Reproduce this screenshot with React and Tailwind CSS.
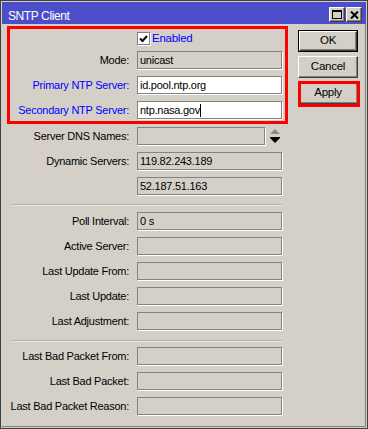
import React from "react";

const FONT = "font-['Liberation_Sans',Arial,sans-serif] text-[11px] tracking-[-0.25px]";

function Field({ value, white, narrow, cursor }) {
  return (
    <div
      className={`h-[18px] ${narrow ? "w-[128px]" : "w-[145px]"} border border-[#858380] shadow-[1px_1px_0_#ffffff] ${
        white ? "bg-white" : "bg-[#d4d0c8]"
      } pl-[2px] leading-[16px] text-black whitespace-nowrap overflow-hidden`}
    >
      {value}
      {cursor && <span className="inline-block w-px h-[13px] bg-black align-[-3px]" />}
    </div>
  );
}

function Row({ label, blue, children }) {
  return (
    <div className="flex h-[25px] items-start">
      <div
        className={`w-[119px] mt-[3px] leading-[18px] text-right whitespace-nowrap ${
          blue ? "text-[#0000ff]" : "text-black"
        }`}
      >
        {label ? label + ":" : ""}
      </div>
      <div className="ml-[8px] mt-[3px] flex items-start">{children}</div>
    </div>
  );
}

function Sep({ top }) {
  return (
    <div className={`h-[10px] ${top ? "pt-[6px]" : "pt-[5px]"} pl-[5px] pr-[6px]`}>
      <div className="h-px bg-[#b4b0a8]" />
      <div className="h-px bg-[#ece9e4]" />
    </div>
  );
}

function Btn({ children, def }) {
  return (
    <div className={`w-[60px] h-[22px] bg-[#d4d0c8] ${def ? "border border-black" : ""}`}>
      <div className="w-full h-full border-t border-l border-t-white border-l-white border-r border-b border-r-[#404040] border-b-[#404040] shadow-[inset_-1px_-1px_0_#808080] flex items-center justify-center text-black leading-none text-[11.5px]">
        {children}
      </div>
    </div>
  );
}

function TitleBtn({ children }) {
  return (
    <div className="w-[16px] h-[15px] bg-[#d4d0c8] border-t border-l border-t-white border-l-white border-r border-b border-r-[#404040] border-b-[#404040] shadow-[inset_-1px_-1px_0_#808080] flex items-center justify-center">
      {children}
    </div>
  );
}

export default function App() {
  return (
    <div className={`w-[368px] h-[429px] box-border border border-[#404040] bg-[#d4d0c8] p-px ${FONT} overflow-hidden`}>
      <div className="h-full flex flex-col shadow-[inset_-1px_-1px_0_#808080]">
        {/* Title bar */}
        <div className="h-[22px] bg-[#4b4dc9] flex items-start justify-between pl-[6px] pr-[4px]">
          <div className="text-white text-[12px] tracking-[-0.4px] leading-[13px] mt-[8px]">SNTP Client</div>
          <div className="flex gap-[1px] mt-[5px]">
            <TitleBtn>
              <svg width="10" height="9" viewBox="0 0 10 9">
                <rect x="0.5" y="0.5" width="9" height="8" fill="none" stroke="#000" />
                <rect x="0" y="0" width="10" height="2" fill="#000" />
              </svg>
            </TitleBtn>
            <TitleBtn>
              <svg width="9" height="8" viewBox="0 0 9 8">
                <path d="M1 0.5 L8 7.5 M8 0.5 L1 7.5" stroke="#000" strokeWidth="2" />
              </svg>
            </TitleBtn>
          </div>
        </div>

        {/* Body */}
        <div className="flex pl-[5px] pt-[2px]">
          {/* Left column */}
          <div className="w-[281px] flex flex-col">
            <div className="h-[98px] border-[3px] border-[#ff0000] overflow-visible">
              <div className="flex h-[19px] items-start">
                <div className="w-[119px]" />
                <div className="ml-[8px] mt-[3px] flex items-center">
                  <div className="w-[13px] h-[13px] bg-white border border-[#808080] shadow-[1px_1px_0_#ffffff] flex items-center justify-center">
                    <svg width="9" height="8" viewBox="0 0 9 8">
                      <path d="M1 3.5 L3.5 6 L8 1" fill="none" stroke="#000" strokeWidth="2" />
                    </svg>
                  </div>
                  <span className="ml-[2px] text-[#0000ff] leading-[13px] text-[11.5px]">Enabled</span>
                </div>
              </div>
              <Row label="Mode">
                <Field value="unicast" />
              </Row>
              <Row label="Primary NTP Server" blue>
                <Field value="id.pool.ntp.org" white />
              </Row>
              <Row label="Secondary NTP Server" blue>
                <Field value="ntp.nasa.gov" white cursor />
              </Row>
            </div>
            <div className="pl-[3px]">
              <Row label="Server DNS Names">
                <Field value="" narrow />
                <svg width="12" height="14" viewBox="0 0 12 14" className="ml-[4px] mt-[2px]">
                  <path d="M1 5 L6 0 L11 5 Z" fill="#8a8a8a" />
                  <rect x="1" y="8" width="10" height="1" fill="#000" />
                  <path d="M1 9 L6 14 L11 9 Z" fill="#000" />
                </svg>
              </Row>
              <Row label="Dynamic Servers">
                <Field value="119.82.243.189" />
              </Row>
              <Row label="">
                <Field value="52.187.51.163" />
              </Row>
            </div>
            <Sep />
            <div className="pl-[3px]">
              <Row label="Poll Interval">
                <Field value="0 s" />
              </Row>
              <Row label="Active Server">
                <Field value="" />
              </Row>
              <Row label="Last Update From">
                <Field value="" />
              </Row>
              <Row label="Last Update">
                <Field value="" />
              </Row>
              <Row label="Last Adjustment">
                <Field value="" />
              </Row>
            </div>
            <Sep top />
            <div className="pl-[3px]">
              <Row label="Last Bad Packet From">
                <Field value="" />
              </Row>
              <Row label="Last Bad Packet">
                <Field value="" />
              </Row>
              <Row label="Last Bad Packet Reason">
                <Field value="" />
              </Row>
            </div>
          </div>

          {/* Right buttons */}
          <div className="ml-[10px] mt-[4px] flex flex-col gap-[4px]">
            <Btn def>OK</Btn>
            <Btn>Cancel</Btn>
            <div className="relative">
              <Btn>Apply</Btn>
              <div className="absolute left-0 top-[-1px] w-[62px] h-[26px] border-[3px] border-[#ff0000]" />
            </div>
          </div>
        </div>
      </div>
    </div>
  );
}
